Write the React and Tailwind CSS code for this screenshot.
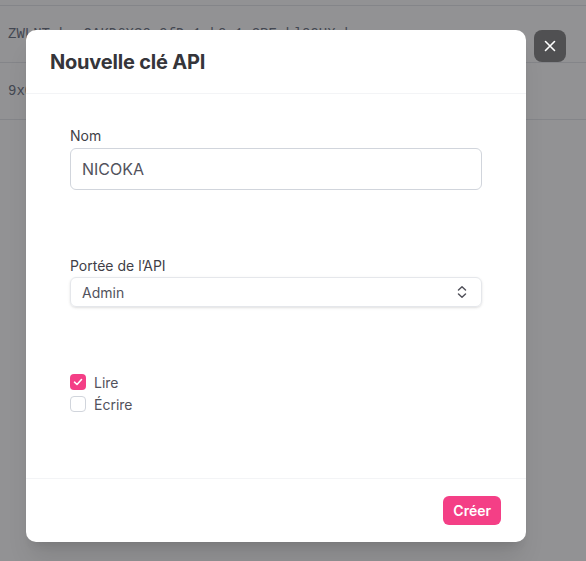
import React, { useState } from "react";

const rows = [
  "ZWLNT-k--OAKD6XS0-9fD-1-k0-1-2PE-kl09UX-k",
  "9xQmP-4r--T7hLw2Zk-8cN-3-p5-7-QaV-mW4rT8-e",
];

export default function App() {
  const [lire, setLire] = useState(true);
  const [ecrire, setEcrire] = useState(false);

  return (
    <div className="relative w-[586px] h-[561px] overflow-hidden bg-white" style={{ fontFamily: "Inter, 'Noto Sans', sans-serif" }}>
      {/* page under the overlay */}
      <div className="pt-[5px]">
        {rows.map((r) => (
          <div key={r} className="h-[57px] border-t border-gray-200 flex items-center px-2 text-[14px] text-gray-500 font-['Liberation_Mono',monospace] whitespace-nowrap">
            {r}
          </div>
        ))}
        <div className="border-t border-gray-200" />
      </div>

      <div className="absolute inset-0 bg-[rgba(24,24,27,0.47)]" />

      {/* modal */}
      <div className="absolute left-[26px] top-[30px] w-[500px] h-[512px] bg-white rounded-[10px] shadow-xl flex flex-col">
        <div className="h-[64px] px-6 flex items-center border-b border-gray-100">
          <h2 className="text-[20px] font-bold text-[#35353a] tracking-[-0.2px]">Nouvelle clé API</h2>
        </div>

        <div className="flex-1 px-[44px] pt-[32px]">
          <label className="block text-[14px] leading-5 text-zinc-700 mb-[2px]">Nom</label>
          <div className="h-[42px] border border-gray-300 rounded-md px-[11px] flex items-center text-[16px] text-zinc-600">
            NICOKA
          </div>

          <label className="block mt-[66px] text-[14px] leading-5 text-zinc-700 mb-[1px]">Portée de l’API</label>
          <div className="h-[30px] border border-gray-200 rounded-md shadow-sm pl-[11px] pr-[13px] flex items-center justify-between text-[14px] text-zinc-600">
            <span>Admin</span>
            <svg width="12" height="14" viewBox="0 0 12 14" fill="none" stroke="#52525b" strokeWidth="1.5" strokeLinecap="round" strokeLinejoin="round">
              <path d="M2.5 5 6 1.8 9.5 5" />
              <path d="M2.5 9 6 12.2 9.5 9" />
            </svg>
          </div>

          <div className="mt-[67px] flex flex-col gap-[6px]">
            <button onClick={() => setLire(!lire)} className="flex items-center gap-2 text-[14px] text-zinc-600 h-4">
              <span className={lire ? "w-4 h-4 rounded bg-[#f43f86] flex items-center justify-center" : "w-4 h-4 rounded border border-gray-300 bg-white"}>
                {lire && (
                  <svg width="12" height="12" viewBox="0 0 12 12" fill="none" stroke="white" strokeWidth="1.6" strokeLinecap="round" strokeLinejoin="round">
                    <path d="M2.5 6.2 5 8.5 9.5 3.5" />
                  </svg>
                )}
              </span>
              Lire
            </button>
            <button onClick={() => setEcrire(!ecrire)} className="flex items-center gap-2 text-[14px] text-zinc-600 h-4">
              <span className={ecrire ? "w-4 h-4 rounded bg-[#f43f86] flex items-center justify-center" : "w-4 h-4 rounded border border-gray-300 bg-white"}>
                {ecrire && (
                  <svg width="12" height="12" viewBox="0 0 12 12" fill="none" stroke="white" strokeWidth="1.6" strokeLinecap="round" strokeLinejoin="round">
                    <path d="M2.5 6.2 5 8.5 9.5 3.5" />
                  </svg>
                )}
              </span>
              Écrire
            </button>
          </div>
        </div>

        <div className="h-[64px] border-t border-gray-100 px-[25px] flex items-center justify-end">
          <button className="h-[29px] px-[10px] rounded-md bg-[#f43f86] text-white text-[14px] font-semibold">Créer</button>
        </div>
      </div>

      <button className="absolute left-[534px] top-[30px] w-8 h-8 rounded-lg bg-[#505052] flex items-center justify-center">
        <svg width="12" height="12" viewBox="0 0 12 12" stroke="white" strokeWidth="1.6" strokeLinecap="round">
          <path d="M1.5 1.5 10.5 10.5M10.5 1.5 1.5 10.5" />
        </svg>
      </button>
    </div>
  );
}
